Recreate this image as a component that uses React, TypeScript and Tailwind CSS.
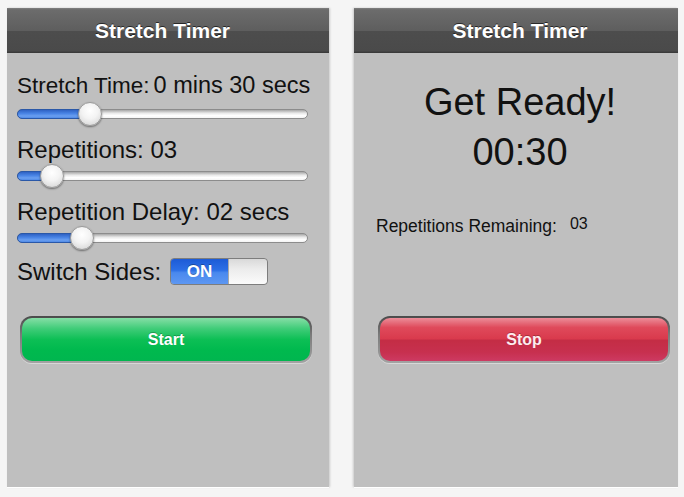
import React from "react";

const font = "font-['Liberation_Sans','Helvetica',Arial,sans-serif]";

function Slider({ pos }: { pos: number }) {
  return (
    <div className="relative ml-[10px] h-[24px] w-[291px]">
      <div className="absolute left-0 right-0 top-[7px] h-[10px] rounded-full border border-[#8c8c8c] bg-[linear-gradient(to_bottom,#a6a6a6_0%,#e9e9e9_40%,#ffffff_70%,#f4f4f4_100%)]" />
      <div
        className="absolute left-0 top-[7px] h-[10px] rounded-l-full border border-[#2a58a8] bg-[linear-gradient(to_bottom,#2f62c4_0%,#4a85e6_45%,#6a9ff0_75%,#4f8ae6_100%)]"
        style={{ width: pos }}
      />
      <div
        className="absolute top-0 h-[24px] w-[24px] rounded-full border border-[#9b9b9b] bg-[radial-gradient(circle_at_50%_35%,#ffffff_0%,#f3f3f3_45%,#cfcfcf_100%)] shadow-[0_1px_2px_rgba(0,0,0,0.45)]"
        style={{ left: pos - 12 }}
      />
    </div>
  );
}

function Header({ pad }: { pad: string }) {
  return (
    <div
      className={`flex h-[45px] items-center justify-center bg-[linear-gradient(to_bottom,#808080_0%,#6c6c6c_4%,#5e5e5e_50%,#4d4d4d_51%,#4a4a4a_95%,#363636_100%)] text-[21px] font-bold leading-[45px] text-white [text-shadow:0_-1px_0_rgba(0,0,0,0.6)] ${pad}`}
    >
      Stretch Timer
    </div>
  );
}

export default function App() {
  return (
    <div className={`flex h-[497px] w-[684px] gap-[25px] bg-[#f5f5f5] pl-[7px] pt-[8px] ${font}`}>
      {/* Left panel */}
      <div className="flex h-[479px] w-[322px] flex-col bg-[#bfbfbf] text-[#111] shadow-[0_1px_0_#ffffff,1px_0_2px_rgba(0,0,0,0.18)]">
        <Header pad="pr-[11px]" />
        <div className="mt-[19px] flex h-[26px] items-baseline pl-[10px] leading-[26px]">
          <span className="text-[22.5px]">Stretch Time:</span>
          <span className="ml-[4px] text-[23.5px]">0 mins 30 secs</span>
        </div>
        <div className="mt-[4px]">
          <Slider pos={73} />
        </div>
        <div className="mt-[11px] h-[26px] pl-[10px] text-[24px] leading-[26px]">Repetitions: 03</div>
        <div className="mt-[1px]">
          <Slider pos={35} />
        </div>
        <div className="mt-[11px] h-[26px] pl-[10px] text-[24px] leading-[26px]">Repetition Delay: 02 secs</div>
        <div className="mt-[1px]">
          <Slider pos={65} />
        </div>
        <div className="mt-[8px] flex h-[27px] items-center pl-[10px]">
          <span className="text-[24px] leading-[27px]">Switch Sides:</span>
          <div className="ml-[9px] flex h-[27px] w-[98px] overflow-hidden rounded-[4px] border border-[#7d7d7d]">
            <div className="flex w-[57px] items-center justify-center bg-[linear-gradient(to_bottom,#1d5bd6_0%,#2c6fe6_45%,#4a89ee_55%,#5d97f2_100%)] pt-[1px] text-[17px] font-bold text-white [text-shadow:0_-1px_0_rgba(0,0,0,0.3)]">
              ON
            </div>
            <div className="flex-1 rounded-r-[3px] border-l border-[#a9a9a9] bg-[linear-gradient(to_bottom,#d9d9d9_0%,#ececec_40%,#fbfbfb_100%)]" />
          </div>
        </div>
        <div className="ml-[13px] mt-[31px] h-[47px] w-[292px] rounded-[12px] bg-[linear-gradient(to_bottom,#4a4a4a_0%,#7a7a7a_40%,#a3a3a3_100%)] p-[2px] shadow-[0_1px_0_rgba(255,255,255,0.4)]">
          <div className="flex h-full items-center justify-center rounded-[10px] bg-[linear-gradient(to_bottom,#86dea6_0%,#3fcc78_25%,#0dbf55_50%,#00b94e_75%,#00b64f_100%)] text-[16px] font-bold text-white [text-shadow:0_-1px_0_rgba(0,0,0,0.25)]">
            Start
          </div>
        </div>
      </div>

      {/* Right panel */}
      <div className="flex h-[479px] w-[324px] flex-col bg-[#bfbfbf] text-[#111] shadow-[0_1px_0_#ffffff,-1px_0_2px_rgba(0,0,0,0.18)]">
        <Header pad="pl-[8px]" />
        <div className="mt-[27px] h-[44px] pl-[8px] text-center text-[38px] leading-[44px]">Get Ready!</div>
        <div className="mt-[6px] h-[44px] pl-[8px] text-center text-[38px] leading-[44px]">00:30</div>
        <div className="mt-[42px] flex items-start pl-[22px]">
          <span className="text-[17.5px] leading-[20px]">Repetitions Remaining:</span>
          <span className="ml-[13px] text-[16px] leading-[16px]">03</span>
        </div>
        <div className="ml-[24px] mt-[80px] h-[47px] w-[292px] rounded-[12px] bg-[linear-gradient(to_bottom,#4a4a4a_0%,#7a7a7a_40%,#a3a3a3_100%)] p-[2px] shadow-[0_1px_0_rgba(255,255,255,0.4)]">
          <div className="flex h-full items-center justify-center rounded-[10px] bg-[linear-gradient(to_bottom,#ec8d99_0%,#df4a5b_22%,#d93a4d_48%,#c42d45_52%,#c7304f_80%,#cd3a62_100%)] text-[16px] font-bold text-[#fdecef] [text-shadow:0_-1px_0_rgba(0,0,0,0.25)]">
            Stop
          </div>
        </div>
      </div>
    </div>
  );
}
